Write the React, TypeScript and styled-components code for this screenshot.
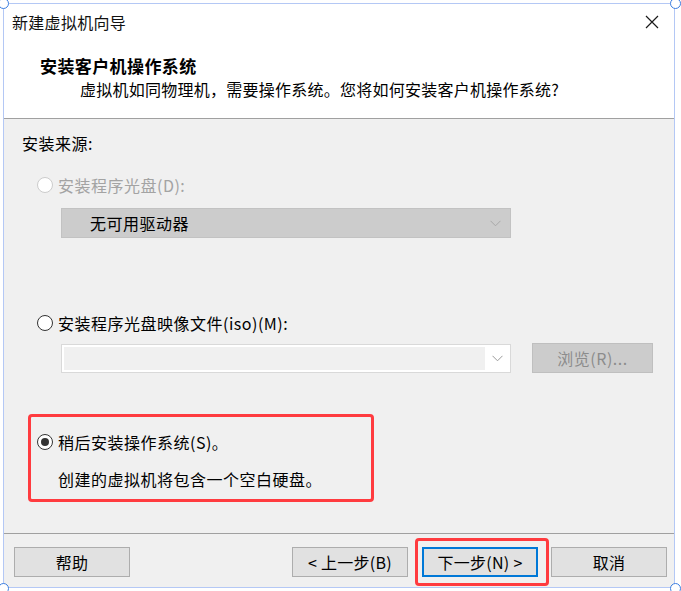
import React from "react";
import styled, { createGlobalStyle, css } from "styled-components";

const GlobalStyle = createGlobalStyle`
  html, body {
    margin: 0;
    padding: 0;
    background: #ffffff;
  }
  body {
    font-family: "Noto Sans CJK SC", "Microsoft YaHei", "Noto Sans", sans-serif;
    color: #000;
    -webkit-font-smoothing: antialiased;
  }
  * { box-sizing: border-box; }
`;

const Page = styled.div`
  width: 681px;
  height: 591px;
  padding: 3px 0 0 3px;
  background: #ffffff;
`;

const Window = styled.div`
  position: relative;
  width: 672px;
  height: 585px;
  border: 1px solid #b4c8f5;
  display: flex;
  flex-direction: column;
  background: #f0f0f0;
`;

type Corner = "tl" | "tr" | "bl" | "br";

const Handle = styled.span<{ $pos: Corner }>`
  position: absolute;
  width: 11px;
  height: 11px;
  border-radius: 50%;
  border: 1.5px solid #3c7ee0;
  background: #ffffff;
  ${({ $pos }) => ($pos.includes("t") ? "top: -6px;" : "bottom: -7px;")}
  ${({ $pos }) => ($pos.includes("l") ? "left: -6px;" : "right: -7px;")}
`;

const TitleBar = styled.div`
  height: 36px;
  display: flex;
  align-items: center;
  justify-content: space-between;
  padding: 0 12px 0 8px;
  background: #ffffff;
`;

const TitleText = styled.span`
  font-size: 16px;
  line-height: 20px;
  color: #111;
  letter-spacing: 0.3px;
`;

const CloseButton = styled.span`
  width: 16px;
  height: 16px;
  display: flex;
  align-items: center;
  justify-content: center;
  margin-right: 2px;
`;

const Header = styled.div`
  height: 79px;
  background: #ffffff;
  border-bottom: 1px solid #a0a0a0;
  padding: 15px 0 0 36px;
`;

const HeaderTitle = styled.div`
  font-size: 17px;
  font-weight: 700;
  line-height: 22px;
  letter-spacing: 0.4px;
`;

const HeaderSub = styled.div`
  font-size: 16px;
  line-height: 24px;
  padding-left: 40px;
  letter-spacing: 0.25px;
`;

const Body = styled.div`
  height: 414px;
  display: flex;
  flex-direction: column;
  align-items: flex-start;
  font-size: 16px;
  letter-spacing: 0.5px;
`;

const SectionLabel = styled.div`
  margin: 13px 0 0 18px;
  line-height: 22px;
`;

const RadioRow = styled.div<{ $disabled?: boolean; $top: number; $left: number }>`
  display: flex;
  align-items: center;
  gap: 5px;
  height: 22px;
  margin-top: ${({ $top }) => $top}px;
  margin-left: ${({ $left }) => $left}px;
  line-height: 22px;
  color: ${({ $disabled }) => ($disabled ? "#a3a3a3" : "#000")};
`;

const RadioCircle = styled.span<{ $state: "disabled" | "off" | "on" }>`
  position: relative;
  width: 16px;
  height: 16px;
  border-radius: 50%;
  background: #ffffff;
  flex: none;
  border: 1px solid ${({ $state }) => ($state === "disabled" ? "#cccccc" : "#333333")};
  ${({ $state }) =>
    $state === "on" &&
    css`
      &::after {
        content: "";
        position: absolute;
        left: 3px;
        top: 3px;
        width: 8px;
        height: 8px;
        border-radius: 50%;
        background: #333333;
      }
    `}
`;

const DisabledSelect = styled.div`
  margin: 12px 0 0 57px;
  width: 450px;
  height: 30px;
  background: #cccccc;
  border: 1px solid #c2c2c2;
  display: flex;
  align-items: center;
  justify-content: space-between;
  padding: 0 9px 0 28px;
  color: #000;
`;

const IsoRow = styled.div`
  margin: 9px 0 0 57px;
  display: flex;
  align-items: flex-start;
  gap: 21px;
`;

const ComboBox = styled.div`
  margin-top: 1px;
  width: 450px;
  height: 29px;
  border: 1px solid #d9d9d9;
  background: #ffffff;
  display: flex;
  padding: 2px 0 2px 2px;
`;

const ComboField = styled.div`
  flex: 1;
  background: #f0f0f0;
`;

const ComboButton = styled.div`
  width: 25px;
  display: flex;
  align-items: center;
  justify-content: center;
`;

const BrowseButton = styled.div`
  width: 121px;
  height: 30px;
  background: #cccccc;
  border: 1px solid #bfbfbf;
  display: flex;
  align-items: center;
  justify-content: center;
  color: #8c8c8c;
`;

const Highlight = styled.div`
  margin: 41px 0 0 24px;
  width: 346px;
  height: 88px;
  border: 3px solid #ff3b3f;
  border-radius: 4px;
  padding: 0 0 0 6px;
  display: flex;
  flex-direction: column;
`;

const Note = styled.div`
  margin: 15px 0 0 21px;
  line-height: 22px;
`;

const Footer = styled.div`
  flex: 1;
  border-top: 1px solid #a0a0a0;
  display: flex;
  align-items: flex-start;
  padding: 13px 7px 0 10px;
`;

const Spacer = styled.div`
  flex: 1;
`;

const Button = styled.div<{ $primary?: boolean; $gap?: number }>`
  width: 116px;
  height: 30px;
  margin-left: ${({ $gap }) => $gap ?? 0}px;
  background: #e1e1e1;
  border: ${({ $primary }) => ($primary ? "2px solid #0078d7" : "1px solid #adadad")};
  display: flex;
  align-items: center;
  justify-content: center;
  font-size: 16px;
  letter-spacing: 0.3px;
  color: #000;
  white-space: pre;
`;

const NextWrap = styled.div`
  position: relative;
  margin-left: 14px;
`;

const Annotation = styled.span`
  position: absolute;
  left: -7px;
  right: -11px;
  top: -9px;
  bottom: -9px;
  border: 3px solid #ff3b3f;
  border-radius: 4px;
  pointer-events: none;
`;

const Chevron: React.FC<{ color?: string }> = ({ color = "#9a9a9a" }) => (
  <svg width="11" height="7" viewBox="0 0 11 7" fill="none">
    <path d="M0.5 0.8 L5.5 5.8 L10.5 0.8" stroke={color} strokeWidth="1" />
  </svg>
);

const CloseIcon = () => (
  <svg width="14" height="14" viewBox="0 0 14 14" fill="none">
    <path d="M1 1 L13 13 M13 1 L1 13" stroke="#1a1a1a" strokeWidth="1.2" />
  </svg>
);

export default function App() {
  return (
    <>
      <GlobalStyle />
      <Page>
        <Window>
          <Handle $pos="tl" />
          <Handle $pos="tr" />
          <Handle $pos="bl" />
          <Handle $pos="br" />
          <TitleBar>
            <TitleText>新建虚拟机向导</TitleText>
            <CloseButton>
              <CloseIcon />
            </CloseButton>
          </TitleBar>
          <Header>
            <HeaderTitle>安装客户机操作系统</HeaderTitle>
            <HeaderSub>虚拟机如同物理机，需要操作系统。您将如何安装客户机操作系统?</HeaderSub>
          </Header>
          <Body>
            <SectionLabel>安装来源:</SectionLabel>
            <RadioRow $disabled $top={20} $left={33}>
              <RadioCircle $state="disabled" />
              安装程序光盘(D):
            </RadioRow>
            <DisabledSelect>
              <span>无可用驱动器</span>
              <Chevron color="#a8a8a8" />
            </DisabledSelect>
            <RadioRow $top={74} $left={33}>
              <RadioCircle $state="off" />
              安装程序光盘映像文件(iso)(M):
            </RadioRow>
            <IsoRow>
              <ComboBox>
                <ComboField />
                <ComboButton>
                  <Chevron />
                </ComboButton>
              </ComboBox>
              <BrowseButton>浏览(R)...</BrowseButton>
            </IsoRow>
            <Highlight>
              <RadioRow $top={14} $left={0}>
                <RadioCircle $state="on" />
                稍后安装操作系统(S)。
              </RadioRow>
              <Note>创建的虚拟机将包含一个空白硬盘。</Note>
            </Highlight>
          </Body>
          <Footer>
            <Button>帮助</Button>
            <Spacer />
            <Button>{"< 上一步(B)"}</Button>
            <NextWrap>
              <Button $primary>{"下一步(N) >"}</Button>
              <Annotation />
            </NextWrap>
            <Button $gap={13}>取消</Button>
          </Footer>
        </Window>
      </Page>
    </>
  );
}
